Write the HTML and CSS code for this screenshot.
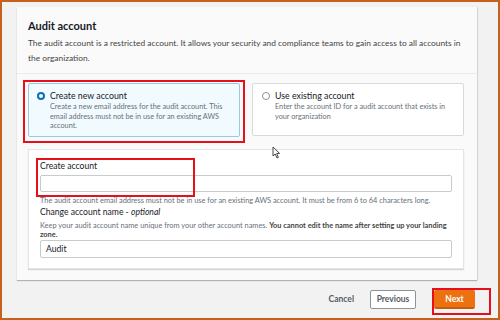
FILE: index.html
```html
<!DOCTYPE html>
<html lang="en">
<head>
  <meta charset="UTF-8" />
  <title>Audit account</title>
  <link rel="stylesheet" href="styles.css">
</head>
<body>
  <div class="frame">
    <section class="panel">
      <div class="panel-head">
        <h2>Audit account</h2>
        <p>The audit account is a restricted account. It allows your security and compliance teams to gain access to all accounts in the organization.</p>
      </div>
      <div class="panel-body">
        <div class="tiles">
          <label class="tile selected">
            <span class="radio on"></span>
            <span class="tile-text">
              <span class="tile-title">Create new account</span>
              <span class="tile-desc">Create a new email address for the audit account. This email address must not be in use for an existing AWS account.</span>
            </span>
          </label>
          <label class="tile">
            <span class="radio"></span>
            <span class="tile-text">
              <span class="tile-title">Use existing account</span>
              <span class="tile-desc">Enter the account ID for a audit account that exists in your organization</span>
            </span>
          </label>
        </div>
        <div class="fields">
          <div class="field-label">Create account</div>
          <div class="input"></div>
          <div class="hint first">The audit account email address must not be in use for an existing AWS account. It must be from 6 to 64 characters long.</div>
          <div class="field-label second">Change account name - <i>optional</i></div>
          <div class="hint">Keep your audit account name unique from your other account names. <b>You cannot edit the name after setting up your landing zone.</b></div>
          <div class="input filled">Audit</div>
        </div>
      </div>
    </section>

    <div class="footer">
      <span class="btn-link">Cancel</span>
      <span class="btn">Previous</span>
      <span class="btn primary">Next</span>
    </div>

    <!-- red annotation boxes -->
    <div class="mark mark-tile"></div>
    <div class="mark mark-field"></div>
    <div class="mark mark-next"></div>

    <svg class="cursor" width="9" height="13" viewBox="0 0 9 13">
      <path d="M1 1 L1 10 L3.2 8 L5 12 L6.4 11.3 L4.7 7.5 L7.6 7.4 Z" fill="#fff" stroke="#333" stroke-width="0.9" stroke-linejoin="round"/>
    </svg>
  </div>
</body>
</html>
```

FILE: styles.css
```css
* {
  box-sizing: border-box;
}

body {
  margin: 0;
  font-family: Lato, "Open Sans", sans-serif;
  color: #16191f;
}

.frame {
  position: relative;
  width: 500px;
  height: 320px;
  border: 2px solid #c4621b;
  background: #f2f2f2;
  padding: 5px 0 0 15px;
  overflow: hidden;
}

.panel {
  width: 460px;
  background: #fafafa;
  box-shadow: 0 1px 1px rgba(0, 0, 0, 0.25), 1px 0 1px rgba(0, 0, 0, 0.08);
}

.panel-head {
  padding: 11px 11px 7px;
  border-bottom: 1px solid #eaeded;
}

.panel-head h2 {
  margin: 0 0 2px;
  font-size: 11px;
  font-weight: 700;
  line-height: 16px;
}

.panel-head p {
  margin: 0;
  font-size: 8.4px;
  line-height: 15px;
  color: #444;
}

.panel-body {
  padding: 9px 13px 11px 11px;
}

.tiles {
  display: grid;
  grid-template-columns: 212px 212px;
  gap: 12px;
}

.tile {
  display: flex;
  gap: 5px;
  padding: 5px 8px 6px 9px;
  background: #fff;
  border: 1px solid #d5dbdb;
  border-radius: 2px;
  height: 53px;
}

.tile.selected {
  background: #f1faff;
  border-color: #97c9df;
  padding-left: 8px;
  height: 54px;
}

.radio {
  flex: none;
  width: 8px;
  height: 8px;
  margin-top: 3px;
  border: 1px solid #8c9595;
  border-radius: 50%;
  background: #fff;
}

.radio.on {
  border: 2.5px solid #0a6fb5;
}

.tile-text {
  display: flex;
  flex-direction: column;
}

.tile-title {
  font-size: 8.8px;
  line-height: 13px;
}

.tile-desc {
  font-size: 7.3px;
  line-height: 9.5px;
  color: #687078;
}

.fields {
  margin-top: 12px;
  padding: 10px 11px 10px 11px;
  background: #fff;
  border: 1px solid #e4e6e6;
  box-shadow: 0 1px 1px rgba(0, 0, 0, 0.15);
}

.field-label {
  font-size: 8.6px;
  line-height: 12px;
  margin-bottom: 3px;
}

.field-label.second {
  margin-bottom: 1px;
}

.input {
  height: 17px;
  border: 1px solid #c6cbcb;
  border-radius: 2px;
  background: #fff;
}

.input.filled {
  height: 18px;
  font-size: 8.6px;
  line-height: 16px;
  padding-left: 5px;
}

.hint {
  font-size: 7.4px;
  line-height: 9.5px;
  color: #687078;
  padding-top: 2px;
}

.hint.first {
  padding-top: 4px;
}

.hint b {
  color: #444;
}

.footer {
  display: flex;
  align-items: center;
  justify-content: flex-end;
  gap: 16px;
  margin-top: 10px;
  padding-right: 23px;
}

.btn-link {
  font-size: 8.5px;
  font-weight: 700;
  color: #545b64;
}

.btn {
  width: 46px;
  height: 19px;
  display: flex;
  align-items: center;
  justify-content: center;
  font-size: 8.5px;
  font-weight: 700;
  color: #545b64;
  background: #fff;
  border: 1px solid #8c9595;
  border-radius: 2px;
}

.btn.primary {
  width: 41px;
  margin-left: 2px;
  color: #fff;
  background: #ec7211;
  border-color: #ec7211;
  border-bottom: 2px solid #c85c08;
}

.mark {
  position: absolute;
  border: 2px solid #e6101c;
}

.mark-tile {
  left: 21px;
  top: 78px;
  width: 222px;
  height: 63px;
}

.mark-field {
  left: 34px;
  top: 156px;
  width: 159px;
  height: 39px;
}

.mark-next {
  left: 430px;
  top: 286px;
  width: 59px;
  height: 27px;
}

.cursor {
  position: absolute;
  left: 270px;
  top: 144px;
}
```
